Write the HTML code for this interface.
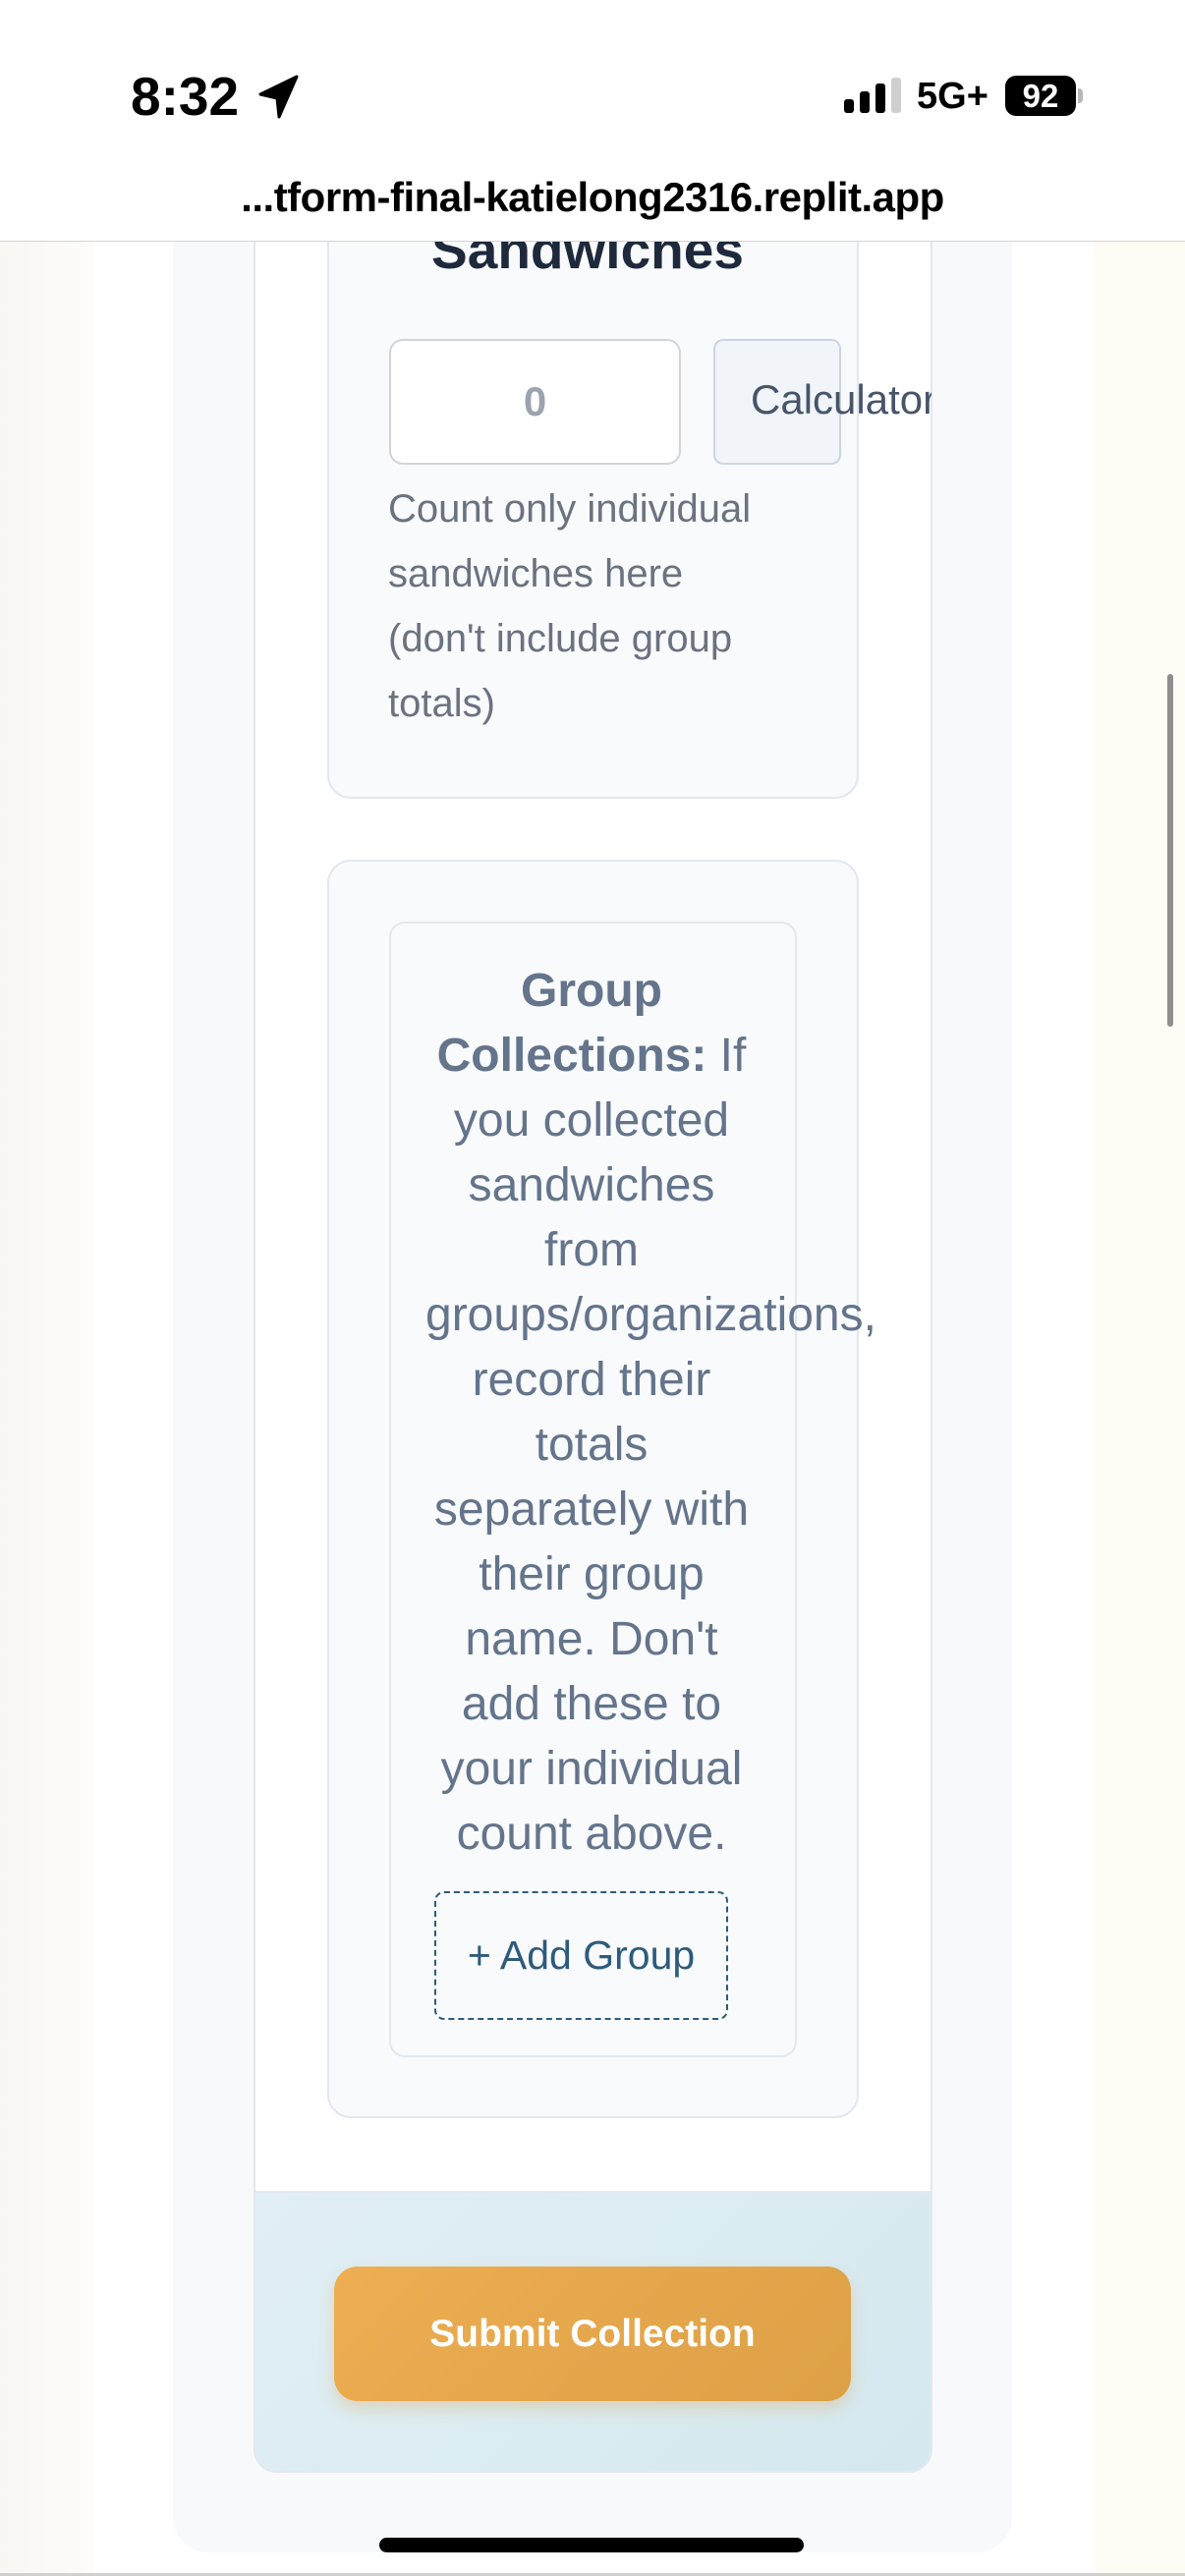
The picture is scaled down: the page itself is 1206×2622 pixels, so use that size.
<!DOCTYPE html>
<html><head><meta charset="utf-8"><style>
*{margin:0;padding:0;box-sizing:border-box}
body{width:1206px;height:2622px;position:relative;overflow:hidden;background:#fff;font-family:"Liberation Sans",Roboto,sans-serif}
.a{position:absolute}
.g{position:absolute;left:0;width:1204px;text-align:center;white-space:nowrap;font-size:48px;line-height:66px;color:#64748b}
</style></head><body>
<div class="a" style="left:0;top:246px;width:95px;height:2376px;background:linear-gradient(90deg,#f8f7f4,#fdfcfb)"></div>
<div class="a" style="left:1112px;top:246px;width:94px;height:2376px;background:#fffcf5"></div>
<div class="a" style="left:176px;top:200px;width:854px;height:2398px;background:#f8f9fb;border-radius:0 0 36px 36px"></div>
<div class="a" style="left:258px;top:200px;width:691px;height:2317px;background:#fff;border:2px solid #e2e8f0;border-radius:0 0 24px 24px;overflow:hidden">
  <div class="a" style="left:0;top:2028px;width:691px;height:290px;background:linear-gradient(135deg,#e1eff4,#d5e8ef);border-top:2px solid #e2e8f0"></div>
</div>
<div class="a" style="left:333px;top:180px;width:541px;height:633px;background:#f8fafc;border:2px solid #e2e8f0;border-radius:24px"></div>
<div class="a" style="left:333px;top:222px;width:530px;text-align:center;font-size:55px;font-weight:bold;color:#1e293b;line-height:64px">Sandwiches</div>
<div class="a" style="left:396px;top:345px;width:297px;height:128px;background:#fff;border:2px solid #d1d5db;border-radius:14px;text-align:center;line-height:124px;font-size:42px;color:#9ca3af;font-weight:bold">0</div>
<div class="a" style="left:726px;top:345px;width:130px;height:128px;background:#f1f5f9;border:2px solid #cbd5e1;border-radius:10px"></div>
<div class="a" style="left:764px;top:345px;width:184px;height:128px;overflow:hidden;line-height:124px;font-size:42px;color:#475569;white-space:nowrap">Calculator</div>
<div class="a" style="left:395px;top:485px;font-size:40px;line-height:66px;color:#6b7280;white-space:nowrap">Count only individual<br>sandwiches here<br>(don't include group<br>totals)</div>
<div class="a" style="left:333px;top:875px;width:541px;height:1281px;background:#f8fafc;border:2px solid #e2e8f0;border-radius:24px"></div>
<div class="a" style="left:396px;top:938px;width:415px;height:1156px;background:#f8fafc;border:2px solid #e2e8f0;border-radius:16px"></div>
<div class="a" style="left:0;top:976px;width:1206px;height:1200px">
<div class="g" style="top:0"><b>Group</b></div>
<div class="g" style="top:66px"><b>Collections:</b> If</div>
<div class="g" style="top:132px">you collected</div>
<div class="g" style="top:198px">sandwiches</div>
<div class="g" style="top:264px">from</div>
<div class="g" style="top:330px;left:433px;width:auto;text-align:left">groups/organizations,</div>
<div class="g" style="top:396px">record their</div>
<div class="g" style="top:462px">totals</div>
<div class="g" style="top:528px">separately with</div>
<div class="g" style="top:594px">their group</div>
<div class="g" style="top:660px">name. Don't</div>
<div class="g" style="top:726px">add these to</div>
<div class="g" style="top:792px">your individual</div>
<div class="g" style="top:858px">count above.</div>
</div>
<div class="a" style="left:442px;top:1925px;width:299px;height:131px;border:2.5px dashed #2d5b7b;border-radius:10px;text-align:center;line-height:126px;font-size:41px;color:#2d5b7b;font-weight:500">+ Add Group</div>
<div class="a" style="left:340px;top:2307px;width:526px;height:137px;border-radius:24px;background:linear-gradient(135deg,#eeae52,#dca046);box-shadow:0 8px 16px rgba(220,160,70,.3);color:#fff;font-weight:bold;font-size:39px;text-align:center;line-height:137px">Submit Collection</div>
<div class="a" style="left:386px;top:2583px;width:432px;height:15px;border-radius:8px;background:#000"></div>
<div class="a" style="left:0;top:2619px;width:1206px;height:3px;background:#d0d0d0"></div>
<div class="a" style="left:1188px;top:686px;width:6px;height:359px;border-radius:3px;background:#8e8e8e"></div>
<div class="a" style="left:0;top:0;width:1206px;height:246px;background:#fff;border-bottom:1.5px solid #d4d4d4"></div>
<div class="a" style="left:133px;top:66px;font-size:55px;font-weight:bold;color:#000;line-height:64px">8:32</div>
<svg class="a" style="left:262px;top:76px" width="44" height="46" viewBox="0 0 44 46"><path d="M40 2 L3 20 L20 24 L22 43 Z" fill="#000" stroke="#000" stroke-width="3" stroke-linejoin="round"/></svg>
<div class="a" style="left:859px;top:101px;width:10px;height:14px;border-radius:3px;background:#000"></div>
<div class="a" style="left:875px;top:93px;width:10px;height:22px;border-radius:3px;background:#000"></div>
<div class="a" style="left:891px;top:85px;width:10px;height:30px;border-radius:3px;background:#000"></div>
<div class="a" style="left:907px;top:79px;width:10px;height:36px;border-radius:3px;background:#cfcfcf"></div>
<div class="a" style="left:933px;top:76px;font-size:38px;font-weight:bold;line-height:44px">5G+</div>
<div class="a" style="left:1023px;top:77px;width:72px;height:41px;border-radius:11px;background:#000;color:#fff;font-size:33px;font-weight:bold;text-align:center;line-height:41px">92</div>
<div class="a" style="left:1097px;top:90px;width:5px;height:15px;border-radius:0 4px 4px 0;background:#b8b8b8"></div>
<div class="a" style="left:0;top:176px;width:1206px;text-align:center;font-size:42px;line-height:50px;color:#000;font-weight:bold;letter-spacing:-0.5px">...tform-final-katielong2316.replit.app</div>
</body></html>
